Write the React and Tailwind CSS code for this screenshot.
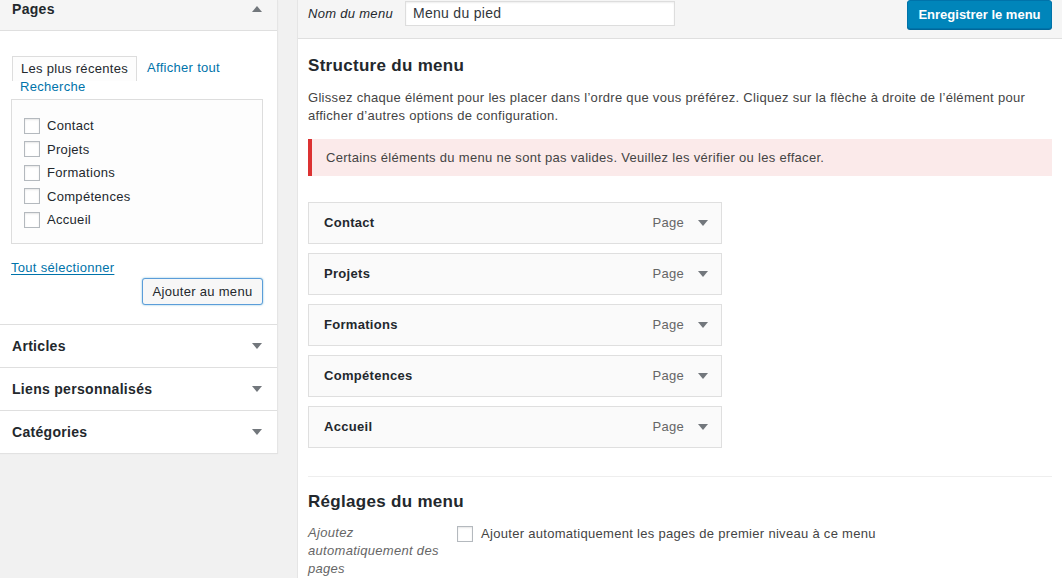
import React from 'react';

const font = { fontFamily: '"Liberation Sans", Arial, sans-serif', letterSpacing: '0.3px' };

function Caret({ up = false }) {
  return (
    <svg width="10" height="6" viewBox="0 0 10 6" className="shrink-0">
      {up ? <path d="M0 6 L5 0 L10 6 Z" fill="#72777c" /> : <path d="M0 0 L10 0 L5 6 Z" fill="#72777c" />}
    </svg>
  );
}

function Checkbox({ className = '' }) {
  return <span className={`inline-block w-4 h-4 border border-[#b4b9be] bg-white shadow-[inset_0_1px_2px_rgba(0,0,0,0.1)] shrink-0 ${className}`} />;
}

const pages = ['Contact', 'Projets', 'Formations', 'Compétences', 'Accueil'];

function Section({ title }) {
  return (
    <div className="h-[43px] border-t border-[#dfdfdf] flex items-center justify-between pl-3 pr-[15px]">
      <span className="text-[14px] font-bold text-[#23282d]">{title}</span>
      <Caret />
    </div>
  );
}

function LeftPanel() {
  return (
    <div className="w-[278px] shrink-0 self-start bg-white border-r border-[#e5e5e5] shadow-[0_1px_1px_rgba(0,0,0,0.06)]">
      {/* Pages (open) */}
      <div className="h-[31px] bg-[#f5f5f5] border-b border-[#dfdfdf] flex items-start justify-between pl-3 pr-[15px]">
        <span className="text-[14px] font-bold text-[#23282d] leading-[18px]">Pages</span>
        <span className="mt-[6px]"><Caret up /></span>
      </div>
      <div className="pl-[11px] pr-[14px] pt-[25px] pb-[19px]">
        <div className="flex flex-wrap items-start w-[252px] text-[13px] leading-[18px]">
          <span className="ml-px px-2 py-[3px] border border-b-0 border-[#ddd] bg-[#fdfdfd] text-[#23282d]">Les plus récentes</span>
          <span className="ml-[2px] px-2 py-[3px] text-[#0073aa]">Afficher tout</span>
          <span className="ml-px px-2 -mt-[3px] text-[#0073aa]">Recherche</span>
        </div>
        <div className="mt-[3px] h-[145px] border border-[#ddd] bg-[#fdfdfd] pt-[14px] pl-3">
          {pages.map((p) => (
            <div key={p} className="h-[23.5px] flex items-center gap-[7px] text-[13px] text-[#23282d]">
              <Checkbox />
              <span>{p}</span>
            </div>
          ))}
        </div>
        <div className="mt-[15px] text-[13px] leading-[18px]">
          <span className="text-[#0073aa] underline underline-offset-2">Tout sélectionner</span>
        </div>
        <div className="flex justify-end mt-[1px]">
          <button className="h-[27px] w-[121px] rounded-[3px] border border-[#5b9dd9] bg-[#f7f7f7] text-[13px] text-[#23282d] shadow-[0_0_2px_rgba(30,140,190,0.6)]">
            Ajouter au menu
          </button>
        </div>
      </div>
      <Section title="Articles" />
      <Section title="Liens personnalisés" />
      <Section title="Catégories" />
    </div>
  );
}

function MenuItem({ title }) {
  return (
    <div className="w-[414px] h-[42px] border border-[#dfdfdf] bg-[#fafafa] flex items-center pl-[15px] pr-[13px]">
      <span className="flex-1 text-[13px] font-bold text-[#23282d]">{title}</span>
      <span className="text-[13px] text-[#666]">Page</span>
      <span className="ml-[14px]"><Caret /></span>
    </div>
  );
}

function MainPanel() {
  return (
    <div className="flex-1 min-w-0 bg-white border-l border-[#e5e5e5]">
      <div className="h-[39px] bg-[#f5f5f5] border-b border-[#dfdfdf] flex items-start pl-[10px] pr-[10px]">
        <span className="mt-[5px] text-[13px] italic text-[#23282d] leading-[18px]">Nom du menu</span>
        <div className="ml-[12px] mt-[1px] w-[270px] h-[25px] border border-[#ddd] bg-white shadow-[inset_0_1px_2px_rgba(0,0,0,0.07)] flex items-center pl-[7px] text-[14px] text-[#32373c]">
          Menu du pied
        </div>
        <div className="flex-1" />
        <button className="h-[29px] w-[145px] rounded-[3px] border border-[#0073aa] bg-[#0085ba] text-white text-[13px] font-bold tracking-normal shadow-[0_1px_0_#006799]">
          Enregistrer le menu
        </button>
      </div>
      <div className="pl-[10px] pr-[10px]">
        <h3 className="mt-[17px] text-[17px] font-bold text-[#23282d] leading-[20px]">Structure du menu</h3>
        <p className="mt-[13px] text-[13px] leading-[18px] text-[#444]">
          Glissez chaque élément pour les placer dans l’ordre que vous préférez. Cliquez sur la flèche à droite de l’élément pour afficher d’autres options de configuration.
        </p>
        <div className="mt-[14px] h-[37px] border-l-4 border-[#dc3232] bg-[#fbeaea] flex items-center pl-[14px] text-[13px] text-[#444]">
          Certains éléments du menu ne sont pas valides. Veuillez les vérifier ou les effacer.
        </div>
        <div className="mt-[26px] flex flex-col gap-[9px]">
          {pages.map((p) => <MenuItem key={p} title={p} />)}
        </div>
        <div className="mt-[28px] border-t border-[#eee]" />
        <h3 className="mt-[15px] text-[17px] font-bold text-[#23282d] leading-[20px]">Réglages du menu</h3>
        <div className="mt-[12px] flex items-start">
          <div className="w-[149px] text-[13px] italic leading-[18px] text-[#666]">
            Ajoutez<br />automatiquement des<br />pages
          </div>
          <div className="flex items-center gap-2 mt-[1px]">
            <Checkbox />
            <span className="text-[13px] text-[#444] leading-[18px]">Ajouter automatiquement les pages de premier niveau à ce menu</span>
          </div>
        </div>
      </div>
    </div>
  );
}

export default function App() {
  return (
    <div style={font} className="w-[1062px] h-[578px] overflow-hidden bg-[#f1f1f1] flex gap-[19px]">
      <LeftPanel />
      <MainPanel />
    </div>
  );
}
